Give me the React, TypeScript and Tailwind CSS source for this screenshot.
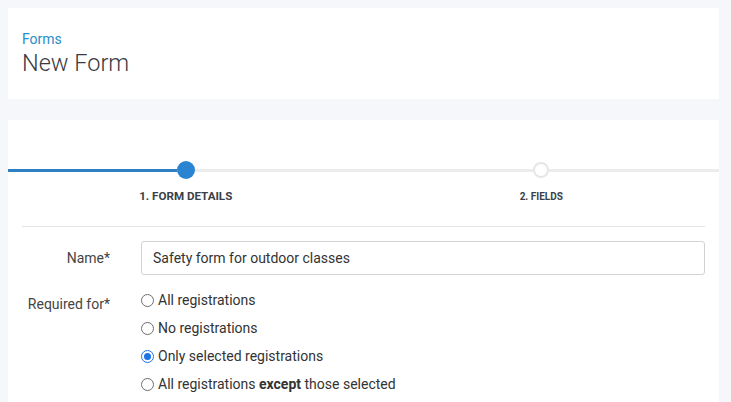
import React from "react";

function Radio({ checked }: { checked?: boolean }) {
  return checked ? (
    <span className="w-[13px] h-[13px] rounded-full border border-[#1a73e8] bg-white flex items-center justify-center shrink-0">
      <span className="w-[7px] h-[7px] rounded-full bg-[#1a73e8]" />
    </span>
  ) : (
    <span className="w-[13px] h-[13px] rounded-full border border-[#6e6e6e] bg-white shrink-0" />
  );
}

export default function App() {
  const options: { label: React.ReactNode; checked?: boolean }[] = [
    { label: "All registrations" },
    { label: "No registrations" },
    { label: "Only selected registrations", checked: true },
    {
      label: (
        <>
          All registrations <b className="font-bold text-[#333]">except</b> those selected
        </>
      ),
    },
  ];
  return (
    <div
      className="w-[731px] h-[402px] overflow-hidden bg-[#f5f7fa] pt-[8px] pl-[8px] pr-[12px]"
      style={{ fontFamily: "Roboto, 'Liberation Sans', sans-serif" }}
    >
      <div className="bg-white h-[91px] pl-[14px] pt-[22px]">
        <div className="text-[14px] leading-[18px] text-[#2a8cc8]">Forms</div>
        <div className="text-[23.5px] leading-[30px] font-light text-[#3a3a42]">New Form</div>
      </div>
      <div className="bg-white mt-[21px] h-[400px] pt-[41px]">
        <div className="flex">
          <div className="flex-1 flex flex-col items-center">
            <div className="w-full flex items-center">
              <div className="flex-1 h-[3px] bg-[#2e7fc3]" />
              <div className="w-[18px] h-[18px] rounded-full bg-[#2a84d2] shrink-0" />
              <div className="flex-1 h-[3px] bg-[#ececec]" />
            </div>
            <div className="mt-[11px] text-[11.6px] leading-[13px] font-bold text-[#3a3f48]">
              1. FORM DETAILS
            </div>
          </div>
          <div className="flex-1 flex flex-col items-center">
            <div className="w-full flex items-center h-[18px]">
              <div className="flex-1 h-[3px] bg-[#ececec]" />
              <div className="w-[16px] h-[16px] rounded-full bg-white border-[2px] border-[#e6e6e6] shrink-0" />
              <div className="flex-1 h-[3px] bg-[#ececec]" />
            </div>
            <div className="mt-[11px] text-[10px] leading-[13px] font-bold text-[#3a3f48]">2. FIELDS</div>
          </div>
        </div>
        <div className="mx-[14px] mt-[23px] border-t border-[#e4e4e4]" />
        <div className="px-[14px] mt-[14px]">
          <div className="flex items-center gap-[31px]">
            <div className="w-[88px] text-right text-[14px] text-[#444]">Name*</div>
            <div className="flex-1 h-[34px] border border-[#d2d2d2] rounded-[3px] flex items-center pl-[11px] text-[14px] text-[#333]">
              Safety form for outdoor classes
            </div>
          </div>
          <div className="flex gap-[31px] mt-[11px]">
            <div className="w-[88px] text-right text-[14px] leading-[20px] text-[#444] pt-[8px]">Required for*</div>
            <div className="flex flex-col">
              {options.map((o, i) => (
                <div key={i} className="h-[28px] flex items-center gap-[4px] text-[14px] text-[#333]">
                  <Radio checked={o.checked} />
                  <span>{o.label}</span>
                </div>
              ))}
            </div>
          </div>
        </div>
      </div>
    </div>
  );
}
